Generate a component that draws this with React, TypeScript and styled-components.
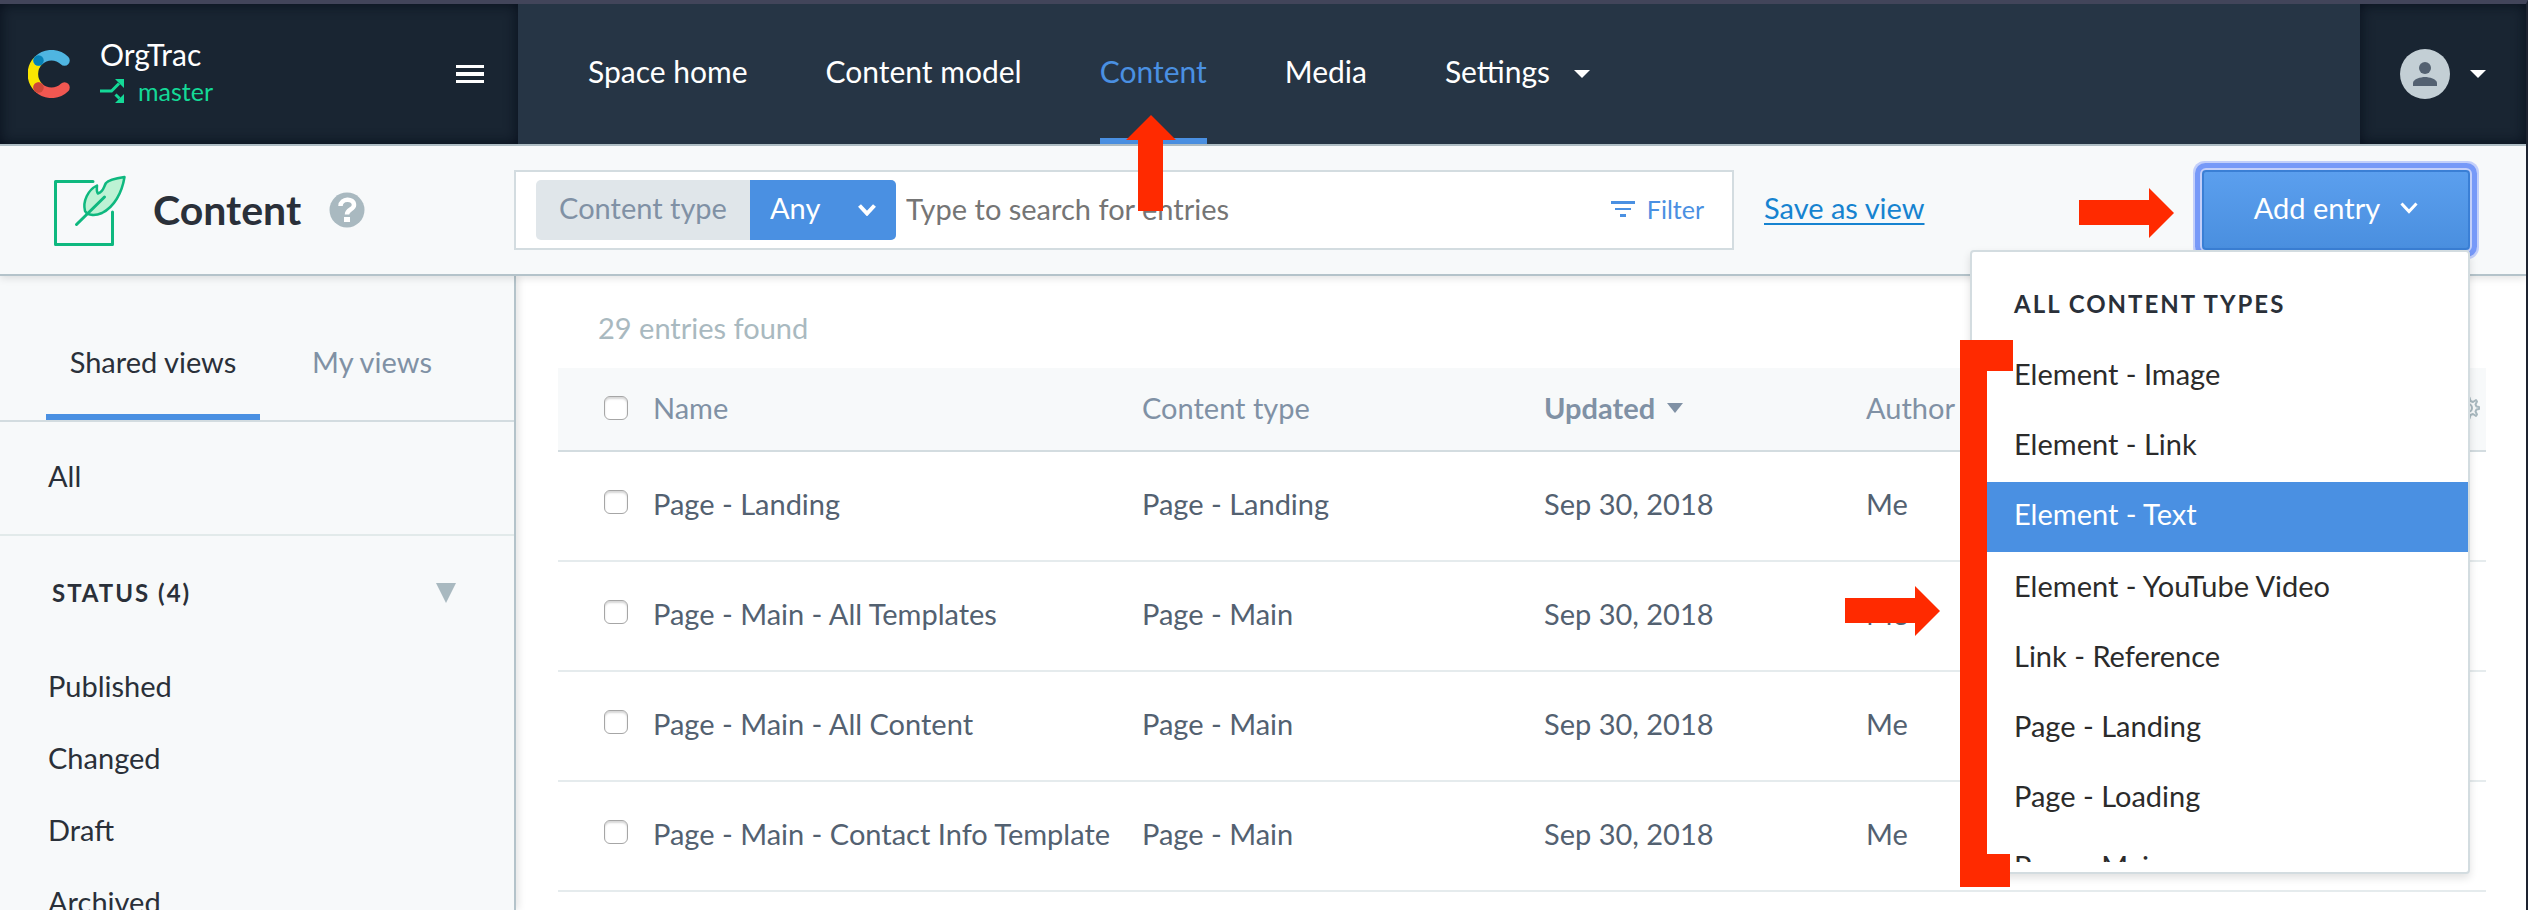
import React from 'react';
import styled, { createGlobalStyle, css } from 'styled-components';

const color = {
  ink: '#2a3039',
  text: '#536171',
  muted: '#8091a5',
  faint: '#a9b9c0',
  line: '#d3dce0',
  lineSoft: '#e5ebed',
  lineStrong: '#b4c3ca',
  panel: '#f7f9fa',
  blue: '#4a90e2',
  link: '#1683d0',
  nav: '#263545',
  navDark: '#192532',
  green: '#14d997',
  callout: '#ff2a00',
};

const GlobalStyle = createGlobalStyle`
  *, *::before, *::after { box-sizing: border-box; }
  body { margin: 0; background: #fff; }
  body, button, input, select, table {
    font-family: Lato, "Liberation Sans", sans-serif;
    font-size: 29px;
    font-weight: 400;
    line-height: 36px;
    color: ${color.ink};
  }
  button, select, input { border: 0; padding: 0; background: none; margin: 0; }
  ul { list-style: none; margin: 0; padding: 0; }
  a { color: inherit; text-decoration: none; }
  svg { display: block; flex: none; }
`;

const Shell = styled.div`
  height: 100vh;
  overflow: hidden;
  display: flex;
  flex-direction: column;
  border-top: 4px solid #42455a;
  border-right: 2px solid #1d2330;
`;

/* ---------- top bar ---------- */

const TopBar = styled.header`
  display: flex;
  flex: none;
  height: 142px;
  background: ${color.nav};
  border-bottom: 2px solid ${color.lineStrong};
`;

const darkBlock = css`
  display: flex;
  align-items: center;
  background: ${color.navDark};
  box-shadow: inset 0 0 14px rgba(4, 10, 22, 0.8);
`;

const Brand = styled.div`
  ${darkBlock}
  width: 518px;
  padding: 0 34px 0 28px;
`;

const BrandText = styled.div`
  flex: 1;
  margin-left: 30px;
  padding-bottom: 4px;
  color: #fff;
`;

const SpaceName = styled.div`
  font-size: 30px;
  line-height: 38px;
`;

const EnvName = styled.div`
  display: flex;
  align-items: center;
  gap: 14px;
  font-size: 25px;
  line-height: 36px;
  color: ${color.green};
`;

const IconButton = styled.button`
  display: flex;
  align-items: center;
  gap: 20px;
  color: inherit;
  cursor: pointer;
`;

const Nav = styled.nav`
  flex: 1;
  display: flex;
  gap: 78px;
  padding-left: 70px;
`;

const NavLink = styled.a<{ $active?: boolean }>`
  position: relative;
  display: flex;
  align-items: center;
  gap: 24px;
  white-space: nowrap;
  font-size: 30px;
  color: ${(p) => (p.$active ? color.blue : '#fff')};
  border-bottom: 6px solid ${(p) => (p.$active ? color.blue : 'transparent')};
`;

const NavCaret = styled.span`
  padding-top: 6px;
`;

const Account = styled.div`
  ${darkBlock}
  width: 166px;
  padding-left: 40px;
  color: #fff;
`;

/* ---------- page header ---------- */

const PageHeader = styled.section`
  position: relative;
  z-index: 2;
  flex: none;
  display: flex;
  align-items: center;
  height: 130px;
  background: ${color.panel};
  border-bottom: 2px solid ${color.lineStrong};
  box-shadow: 0 2px 8px rgba(0, 0, 0, 0.12);
`;

const TitleArea = styled.div`
  display: flex;
  align-items: center;
  width: 514px;
  padding-left: 52px;
`;

const Title = styled.h1`
  margin: 0 28px 0 26px;
  font-size: 41px;
  line-height: 48px;
  font-weight: 700;
`;

const SearchBox = styled.div`
  flex: 1;
  display: flex;
  align-items: center;
  height: 80px;
  padding: 0 28px 0 20px;
  background: #fff;
  border: 2px solid ${color.line};
`;

const FilterPill = styled.label`
  position: relative;
  display: flex;
  align-items: center;
  height: 60px;
  border-radius: 5px;
  overflow: hidden;
  background: #e0e6ea;
  color: ${color.muted};
`;

const PillName = styled.span`
  width: 214px;
  padding-bottom: 4px;
  text-align: center;
`;

const PillSelect = styled.select`
  appearance: none;
  width: 146px;
  height: 60px;
  padding: 0 0 4px 20px;
  background: ${color.blue};
  color: #fff;
`;

const PillChevron = styled.span`
  position: absolute;
  right: 20px;
  color: #fff;
  pointer-events: none;
`;

const SearchInput = styled.input`
  flex: 1;
  min-width: 0;
  height: 60px;
  padding: 0 0 4px 10px;
  outline: none;
  &::placeholder { color: #757575; opacity: 1; }
`;

const FilterButton = styled.button`
  display: flex;
  align-items: center;
  gap: 12px;
  padding-bottom: 2px;
  font-size: 25px;
  color: ${color.blue};
`;

const HeaderActions = styled.div`
  display: flex;
  align-items: center;
  justify-content: space-between;
  width: 792px;
  padding: 0 56px 0 30px;
`;

const SaveLink = styled.a`
  padding-bottom: 4px;
  color: ${color.link};
  text-decoration: underline;
  text-decoration-thickness: 2px;
  text-underline-offset: 4px;
`;

const AddEntry = styled.div`
  position: relative;
`;

const AddButton = styled.button`
  display: flex;
  align-items: center;
  justify-content: center;
  gap: 20px;
  width: 268px;
  height: 80px;
  padding-bottom: 4px;
  border: 2px solid #3a7fd5;
  border-radius: 4px;
  background: linear-gradient(#5b9fee, #4a8fdf);
  color: #fff;
  box-shadow: 0 0 0 2px #c3cffa, 0 0 0 7px #7799f8, 0 0 0 9px #c3cffa;
`;

/* ---------- content type menu ---------- */

const Menu = styled.div`
  position: absolute;
  top: 80px;
  right: 0;
  width: 500px;
  padding-bottom: 10px;
  background: #fff;
  border: 2px solid ${color.line};
  border-radius: 4px;
  box-shadow: 0 4px 8px rgba(0, 0, 0, 0.12);
`;

const SectionTitle = styled.h2`
  margin: 0;
  font-size: 24px;
  line-height: 32px;
  font-weight: 700;
  letter-spacing: 2px;
`;

const MenuTitle = styled(SectionTitle)`
  padding: 36px 42px 22px;
`;

const MenuList = styled.ul`
  height: 520px;
  overflow: hidden;
`;

const MenuItem = styled.button<{ $active?: boolean }>`
  display: block;
  width: 100%;
  height: 70px;
  margin-bottom: ${(p) => (p.$active ? '2px' : '0')};
  padding: 0 42px 6px;
  text-align: left;
  background: ${(p) => (p.$active ? color.blue : 'transparent')};
  color: ${(p) => (p.$active ? '#fff' : '#2b2b2b')};
`;

/* ---------- callouts drawn over the page ---------- */

const NavCallout = styled.span`
  position: absolute;
  z-index: 3;
  top: 111px;
  left: 26px;
`;

const ButtonCallout = styled.span`
  position: absolute;
  top: 18px;
  right: 296px;
`;

const MenuCallout = styled.span`
  position: absolute;
  top: 334px;
  right: 528px;
`;

const BracketCallout = styled.span`
  position: absolute;
  top: 88px;
  left: -12px;
`;

/* ---------- body ---------- */

const Body = styled.div`
  flex: 1;
  min-height: 0;
  display: flex;
`;

const Sidebar = styled.aside`
  flex: none;
  width: 516px;
  overflow: hidden;
  background: ${color.panel};
  border-right: 2px solid ${color.lineStrong};
  box-shadow: 2px 0 8px rgba(0, 0, 0, 0.12);
`;

const Tabs = styled.div`
  display: flex;
  height: 146px;
  padding-left: 46px;
  border-bottom: 2px solid ${color.line};
`;

const Tab = styled.button<{ $active?: boolean }>`
  width: 214px;
  padding-top: 34px;
  border-bottom: 6px solid ${(p) => (p.$active ? color.blue : 'transparent')};
  color: ${(p) => (p.$active ? color.ink : color.muted)};
  & + & { width: 224px; }
`;

const AllViews = styled.a`
  display: flex;
  align-items: center;
  height: 114px;
  padding: 0 48px 4px;
  border-bottom: 2px solid #e2eaea;
`;

const GroupHeader = styled.div`
  display: flex;
  align-items: center;
  justify-content: space-between;
  height: 114px;
  padding: 0 58px 0 52px;
`;

const ViewLink = styled.a`
  display: flex;
  align-items: center;
  height: 72px;
  padding: 0 48px;
`;

const Main = styled.main`
  flex: 1;
  min-width: 0;
  padding: 34px 40px 0 42px;
`;

const Count = styled.p`
  margin: 0;
  padding: 0 40px 22px;
  color: ${color.faint};
`;

const Table = styled.table`
  width: 100%;
  table-layout: fixed;
  border-collapse: separate;
  border-spacing: 0;
  text-align: left;
  white-space: nowrap;
  color: ${color.text};
`;

const Col = styled.col<{ $width?: number }>`
  width: ${(p) => (p.$width ? `${p.$width}px` : 'auto')};
`;

const Th = styled.th<{ $sorted?: boolean }>`
  height: 84px;
  padding: 0 0 2px;
  background: ${color.panel};
  border-bottom: 2px solid ${color.line};
  color: ${color.muted};
  font-weight: ${(p) => (p.$sorted ? 700 : 400)};
`;

const SortButton = styled.button`
  display: flex;
  align-items: center;
  gap: 12px;
  font-weight: inherit;
  color: inherit;
`;

const Td = styled.td`
  height: 110px;
  padding: 0 0 4px;
  border-bottom: 2px solid ${color.lineSoft};
`;

const Check = styled.input`
  appearance: none;
  display: block;
  width: 24px;
  height: 24px;
  margin: 0 0 0 46px;
  background: #fff;
  border: 1px solid #a6a6a6;
  border-radius: 6px;
  box-shadow: inset 0 2px 2px rgba(0, 0, 0, 0.16);
  td & { margin-bottom: 4px; }
`;

/* ---------- drawings ---------- */

const Caret = ({ w = 16, h = 8 }: { w?: number; h?: number }) => (
  <svg width={w} height={h} viewBox="0 0 16 8" preserveAspectRatio="none" aria-hidden="true">
    <path d="M0 0h16L8 8z" fill="currentColor" />
  </svg>
);

const Chevron = ({ thick = 3 }: { thick?: number }) => (
  <svg width="18" height="12" viewBox="0 0 18 12" fill="none" aria-hidden="true">
    <path d="M1.500 1.500l7.500 8 7.500-8" stroke="currentColor" strokeWidth={thick} />
  </svg>
);

const Logo = () => (
  <svg width="42" height="48" viewBox="0 0 42 48" fill="none" strokeLinecap="round" aria-hidden="true">
    <path d="M10.500 10.500A19 19 0 0 0 10.500 37.500" stroke="#fae501" strokeWidth="10.500" />
    <path d="M10.500 10.500A18.500 18.500 0 0 1 36.500 10.500" stroke="#4fb5e1" strokeWidth="10.500" />
    <path d="M10.500 37.500A18.500 18.500 0 0 0 36.500 37.500" stroke="#f05751" strokeWidth="10.500" />
    <circle cx="10.500" cy="10.500" r="5.200" fill="#0681b6" />
    <circle cx="10.500" cy="37.500" r="5.200" fill="#cd4739" />
  </svg>
);

const Branch = () => (
  <svg width="24" height="24" viewBox="0 0 24 24" aria-hidden="true">
    <path d="M0 12h11.500l7.500-7.500" fill="none" stroke="currentColor" strokeWidth="3" />
    <path d="M15.500 15.500l4 4" fill="none" stroke="currentColor" strokeWidth="3" />
    <path d="M15 0h9v9zM24 15v9h-9z" fill="currentColor" />
  </svg>
);

const Burger = () => (
  <svg width="28" height="18" viewBox="0 0 28 18" aria-hidden="true">
    <path d="M0 0h28v3H0zM0 7h28v4H0zM0 15h28v3H0z" fill="#fff" />
  </svg>
);

const Avatar = () => (
  <svg width="50" height="50" viewBox="0 0 50 50" aria-hidden="true">
    <circle cx="25" cy="25" r="25" fill="#c3cfd5" />
    <circle cx="25" cy="19" r="6" fill="#536171" />
    <path d="M13 37v-3c0-4 8-6 12-6s12 2 12 6v3z" fill="#536171" />
  </svg>
);

const ContentIcon = () => (
  <svg width="75" height="74" viewBox="0 0 75 74" fill="none" stroke="#0eb87f" strokeWidth="3" strokeLinecap="round" strokeLinejoin="round" aria-hidden="true">
    <path d="M41 8.500H3.500V71.500H60.500V39" />
    <path
      d="M72.500 4C66 5 57 6.500 54 10C51.500 14 51.500 19 46 20.500C44 18.500 45 16 45 12.500C36 17 30.500 28 33 38C35 42 42 43.500 50 40C62 34 70 20 72.500 4Z"
      fill="#bdf2d4"
      strokeWidth="2.500"
    />
    <path d="M52.500 24L24.500 51.500" />
  </svg>
);

const Help = () => (
  <svg width="36" height="36" viewBox="0 0 36 36" fill="none" aria-hidden="true">
    <circle cx="18" cy="18" r="17.500" fill={color.faint} />
    <path d="M11.500 14c0-8 13.500-8.500 13.500-1 0 4.500-7 4.500-7 9.500" stroke="#fff" strokeWidth="4.500" />
    <path d="M15 25h6v5h-6z" fill="#fff" />
  </svg>
);

const FilterIcon = () => (
  <svg width="24" height="16" viewBox="0 0 24 16" aria-hidden="true">
    <path d="M0 0h24v3H0zM4 7h16v2H4zM9 13h6v3H9z" fill="currentColor" />
  </svg>
);

const Gear = () => (
  <svg width="24" height="24" viewBox="0 0 24 24" fill="none" stroke={color.faint} strokeWidth="2" strokeLinejoin="round" aria-hidden="true">
    <path d="M10.500 1.500h3L14.500 5l2.500 1 3-2 1 1.500-1.500 3 1 2 2.500.5v2l-2.500.5-1 2 1.500 3-1 1.500-3-2-2.500 1-1 3.500h-3l-1-3.500L7 18l-3 2-1-1.500 1.500-3-1-2L1 13v-2l2.500-.5 1-2L3 5.500 4 4l3 2 2.500-1z" />
    <circle cx="12" cy="12" r="4" />
  </svg>
);

const ArrowUp = () => (
  <svg width="50" height="96" viewBox="0 0 50 96" aria-hidden="true">
    <path d="M25 0l25 25H37v71H12V25H0z" fill={color.callout} />
  </svg>
);

const ArrowRight = () => (
  <svg width="95" height="50" viewBox="0 0 95 50" aria-hidden="true">
    <path d="M0 12h70V0l25 25-25 25V37H0z" fill={color.callout} />
  </svg>
);

const Bracket = () => (
  <svg width="53" height="547" viewBox="0 0 53 547" aria-hidden="true">
    <path d="M0 0h53v31H27v483h23v33H0z" fill={color.callout} />
  </svg>
);

/* ---------- data ---------- */

const contentTypes = [
  'Element - Image',
  'Element - Link',
  'Element - Text',
  'Element - YouTube Video',
  'Link - Reference',
  'Page - Landing',
  'Page - Loading',
  'Page - Main',
];

const entries = [
  { name: 'Page - Landing', type: 'Page - Landing' },
  { name: 'Page - Main - All Templates', type: 'Page - Main' },
  { name: 'Page - Main - All Content', type: 'Page - Main' },
  { name: 'Page - Main - Contact Info Template', type: 'Page - Main' },
];

const statuses = ['Published', 'Changed', 'Draft', 'Archived'];

export default function App() {
  return (
    <>
      <GlobalStyle />
      <Shell>
        <TopBar>
          <Brand>
            <Logo />
            <BrandText>
              <SpaceName>OrgTrac</SpaceName>
              <EnvName>
                <Branch />
                master
              </EnvName>
            </BrandText>
            <IconButton aria-label="Open space menu">
              <Burger />
            </IconButton>
          </Brand>
          <Nav>
            <NavLink href="#home">Space home</NavLink>
            <NavLink href="#model">Content model</NavLink>
            <NavLink href="#content" $active>
              Content
              <NavCallout>
                <ArrowUp />
              </NavCallout>
            </NavLink>
            <NavLink href="#media">Media</NavLink>
            <NavLink href="#settings">
              Settings
              <NavCaret>
                <Caret />
              </NavCaret>
            </NavLink>
          </Nav>
          <Account>
            <IconButton aria-label="Account">
              <Avatar />
              <Caret />
            </IconButton>
          </Account>
        </TopBar>

        <PageHeader>
          <TitleArea>
            <ContentIcon />
            <Title>Content</Title>
            <Help />
          </TitleArea>
          <SearchBox>
            <FilterPill>
              <PillName>Content type</PillName>
              <PillSelect defaultValue="Any">
                <option>Any</option>
              </PillSelect>
              <PillChevron>
                <Chevron thick={4} />
              </PillChevron>
            </FilterPill>
            <SearchInput type="text" aria-label="Search entries" placeholder="Type to search for entries" />
            <FilterButton>
              <FilterIcon />
              Filter
            </FilterButton>
          </SearchBox>
          <HeaderActions>
            <SaveLink href="#save">Save as view</SaveLink>
            <AddEntry>
              <AddButton>
                Add entry
                <Chevron />
              </AddButton>
              <ButtonCallout>
                <ArrowRight />
              </ButtonCallout>
              <Menu>
                <MenuTitle>ALL CONTENT TYPES</MenuTitle>
                <MenuList>
                  {contentTypes.map((type) => (
                    <li key={type}>
                      <MenuItem $active={type === 'Element - Text'}>{type}</MenuItem>
                    </li>
                  ))}
                </MenuList>
                <MenuCallout>
                  <ArrowRight />
                </MenuCallout>
                <BracketCallout>
                  <Bracket />
                </BracketCallout>
              </Menu>
            </AddEntry>
          </HeaderActions>
        </PageHeader>

        <Body>
          <Sidebar>
            <Tabs>
              <Tab $active>Shared views</Tab>
              <Tab>My views</Tab>
            </Tabs>
            <AllViews href="#all">All</AllViews>
            <GroupHeader>
              <SectionTitle>STATUS (4)</SectionTitle>
              <IconButton aria-label="Collapse status">
                <svg width="20" height="20" viewBox="0 0 20 20" aria-hidden="true">
                  <path d="M0 0h20L10 20z" fill={color.faint} />
                </svg>
              </IconButton>
            </GroupHeader>
            {statuses.map((s) => (
              <ViewLink key={s} href={`#${s.toLowerCase()}`}>
                {s}
              </ViewLink>
            ))}
          </Sidebar>

          <Main>
            <Count>29 entries found</Count>
            <Table>
              <colgroup>
                <Col $width={95} />
                <Col $width={489} />
                <Col $width={402} />
                <Col $width={322} />
                <Col />
                <Col $width={30} />
              </colgroup>
              <thead>
                <tr>
                  <Th>
                    <Check type="checkbox" aria-label="Select all entries" />
                  </Th>
                  <Th>Name</Th>
                  <Th>Content type</Th>
                  <Th $sorted>
                    <SortButton>
                      Updated
                      <Caret h={10} />
                    </SortButton>
                  </Th>
                  <Th>Author</Th>
                  <Th>
                    <IconButton aria-label="Table settings">
                      <Gear />
                    </IconButton>
                  </Th>
                </tr>
              </thead>
              <tbody>
                {entries.map((e) => (
                  <tr key={e.name}>
                    <Td>
                      <Check type="checkbox" aria-label={`Select ${e.name}`} />
                    </Td>
                    <Td>{e.name}</Td>
                    <Td>{e.type}</Td>
                    <Td>Sep 30, 2018</Td>
                    <Td colSpan={2}>Me</Td>
                  </tr>
                ))}
              </tbody>
            </Table>
          </Main>
        </Body>
      </Shell>
    </>
  );
}
